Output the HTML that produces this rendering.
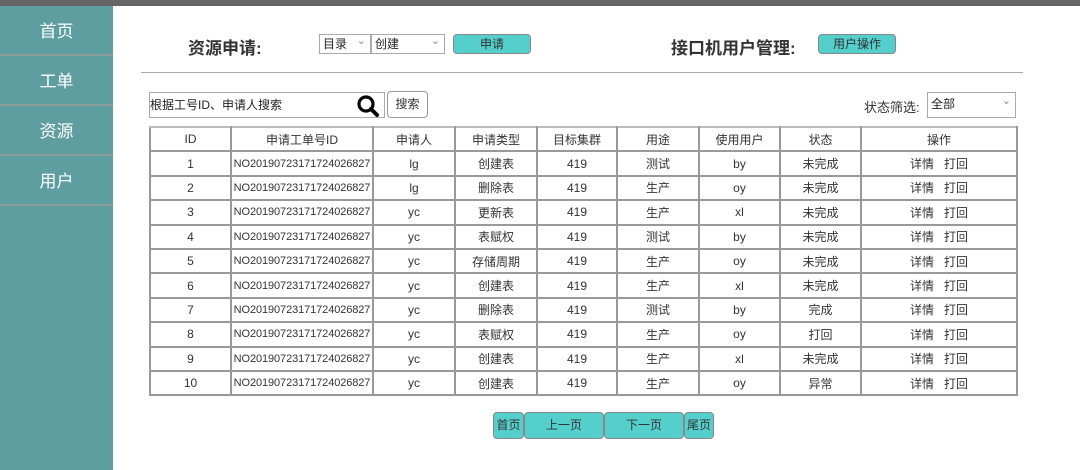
<!DOCTYPE html>
<html><head><meta charset="utf-8"><style>
*{margin:0;padding:0;box-sizing:border-box}
body{width:1080px;height:470px;overflow:hidden;background:#fff;font-family:"Liberation Sans","Noto Sans CJK SC",sans-serif;position:relative;color:#333}
.top{position:absolute;left:0;top:0;width:1080px;height:6px;background:#666}
.side{position:absolute;left:0;top:6px;width:113px;height:464px;background:#5f9ea0}
.side div{height:50px;border-bottom:2px solid #8a9b9b;color:#fff;font-size:17px;text-align:center;line-height:52px}
.abs{position:absolute}
.h{font-size:17px;font-weight:bold;color:#333}
.sel{position:absolute;height:20px;border:1px solid #aaa;font-size:12px;line-height:18px;padding-left:3px;background:#fff;color:#222}
.sel:after{content:"⌄";position:absolute;right:4px;top:-3px;color:#888;font-size:11px}
.btn{position:absolute;background:#55cfcc;border:1px solid #888;border-radius:4px;font-size:12px;text-align:center;color:#333}
table{position:absolute;left:149px;top:126px;width:867px;border-collapse:collapse;font-size:12px;table-layout:fixed}
td,th{border:2px solid #999;text-align:center;height:24.4px;font-weight:normal;color:#333;padding:0;white-space:nowrap;overflow:hidden}
th{border-color:#bbb #999 #999 #999}
td:nth-child(2){font-size:11px;letter-spacing:-0.1px}
</style></head><body>
<div class="top"></div>
<div class="side"><div>首页</div><div>工单</div><div>资源</div><div>用户</div></div>
<div class="abs h" style="left:188px;top:34px">资源申请:</div>
<div class="sel" style="left:319px;top:34px;width:52px">目录</div>
<div class="sel" style="left:371px;top:34px;width:74px">创建</div>
<div class="btn" style="left:453px;top:34px;width:78px;height:20px;line-height:18px">申请</div>
<div class="abs h" style="left:671px;top:34px">接口机用户管理:</div>
<div class="btn" style="left:818px;top:34px;width:78px;height:20px;line-height:18px">用户操作</div>
<div class="abs" style="left:141px;top:72px;width:882px;height:1px;background:#aaa"></div>
<div class="abs" style="left:149px;top:92px;width:236px;height:26px;border:1px solid #aaa;font-size:12px;line-height:24px;color:#222">根据工号ID、申请人搜索
<svg style="position:absolute;right:4px;top:2px" width="24" height="22" viewBox="0 0 24 22"><circle cx="10" cy="9" r="7" fill="none" stroke="#000" stroke-width="3.2"/><path d="M15 14 L21 20" stroke="#000" stroke-width="4" stroke-linecap="round"/></svg></div>
<div class="abs" style="left:387px;top:91px;width:41px;height:27px;border:1px solid #999;border-radius:4px;font-size:12px;line-height:25px;text-align:center">搜索</div>
<div class="abs" style="left:864px;top:97px;font-size:13px">状态筛选:</div>
<div class="sel" style="left:927px;top:92px;width:89px;height:26px;line-height:22px">全部</div>
<table>
<colgroup><col style="width:81px"><col style="width:142px"><col style="width:82px"><col style="width:82px"><col style="width:80px"><col style="width:82px"><col style="width:81px"><col style="width:81px"><col style="width:156px"></colgroup>
<tr><th>ID</th><th>申请工单号ID</th><th>申请人</th><th>申请类型</th><th>目标集群</th><th>用途</th><th>使用用户</th><th>状态</th><th>操作</th></tr>
<tr><td>1</td><td>NO20190723171724026827</td><td>lg</td><td>创建表</td><td>419</td><td>测试</td><td>by</td><td>未完成</td><td>详情&nbsp;&nbsp;&nbsp;打回</td></tr>
<tr><td>2</td><td>NO20190723171724026827</td><td>lg</td><td>删除表</td><td>419</td><td>生产</td><td>oy</td><td>未完成</td><td>详情&nbsp;&nbsp;&nbsp;打回</td></tr>
<tr><td>3</td><td>NO20190723171724026827</td><td>yc</td><td>更新表</td><td>419</td><td>生产</td><td>xl</td><td>未完成</td><td>详情&nbsp;&nbsp;&nbsp;打回</td></tr>
<tr><td>4</td><td>NO20190723171724026827</td><td>yc</td><td>表赋权</td><td>419</td><td>测试</td><td>by</td><td>未完成</td><td>详情&nbsp;&nbsp;&nbsp;打回</td></tr>
<tr><td>5</td><td>NO20190723171724026827</td><td>yc</td><td>存储周期</td><td>419</td><td>生产</td><td>oy</td><td>未完成</td><td>详情&nbsp;&nbsp;&nbsp;打回</td></tr>
<tr><td>6</td><td>NO20190723171724026827</td><td>yc</td><td>创建表</td><td>419</td><td>生产</td><td>xl</td><td>未完成</td><td>详情&nbsp;&nbsp;&nbsp;打回</td></tr>
<tr><td>7</td><td>NO20190723171724026827</td><td>yc</td><td>删除表</td><td>419</td><td>测试</td><td>by</td><td>完成</td><td>详情&nbsp;&nbsp;&nbsp;打回</td></tr>
<tr><td>8</td><td>NO20190723171724026827</td><td>yc</td><td>表赋权</td><td>419</td><td>生产</td><td>oy</td><td>打回</td><td>详情&nbsp;&nbsp;&nbsp;打回</td></tr>
<tr><td>9</td><td>NO20190723171724026827</td><td>yc</td><td>创建表</td><td>419</td><td>生产</td><td>xl</td><td>未完成</td><td>详情&nbsp;&nbsp;&nbsp;打回</td></tr>
<tr><td>10</td><td>NO20190723171724026827</td><td>yc</td><td>创建表</td><td>419</td><td>生产</td><td>oy</td><td>异常</td><td>详情&nbsp;&nbsp;&nbsp;打回</td></tr>
</table>
<div class="btn" style="left:493px;top:412px;width:31px;height:27px;line-height:25px">首页</div>
<div class="btn" style="left:524px;top:412px;width:80px;height:27px;line-height:25px">上一页</div>
<div class="btn" style="left:604px;top:412px;width:80px;height:27px;line-height:25px">下一页</div>
<div class="btn" style="left:684px;top:412px;width:30px;height:27px;line-height:25px">尾页</div>
</body></html>
